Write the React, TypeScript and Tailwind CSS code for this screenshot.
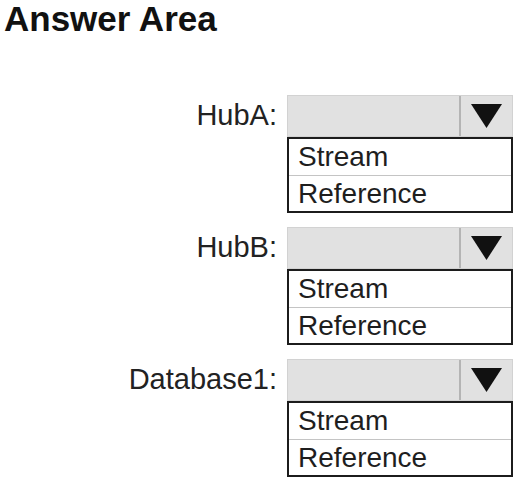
const fields = ["HubA:", "HubB:", "Database1:"];
const options = ["Stream", "Reference"];

function Dropdown() {
  return (
    <div className="flex h-[42px] border border-[#d2d2d2] bg-[#e1e1e1]">
      <div className="flex-1" />
      <div className="flex w-[53px] items-center justify-center border-l-2 border-[#b4b4b4]">
        <svg width="31" height="24" viewBox="0 0 31 24" aria-hidden="true">
          <polygon points="0,0 31,0 15.5,24" fill="#111" />
        </svg>
      </div>
    </div>
  );
}

function OptionList() {
  return (
    <div className="border-2 border-[#1c1c1c] bg-white">
      {options.map((opt, i) => (
        <div
          key={opt}
          className={
            "h-[36px] pl-[9px] text-[28px] leading-[36px] text-[#1e1e1e] " +
            (i > 0 ? "border-t border-[#c4c4c4]" : "")
          }
        >
          {opt}
        </div>
      ))}
    </div>
  );
}

export default function App() {
  return (
    <div className="h-[481px] w-[518px] overflow-hidden bg-white font-['Liberation_Sans',Arial,sans-serif]">
      <h1 className="pl-[4px] text-[35px] font-bold leading-[38px] text-[#111]">Answer Area</h1>
      <div className="mt-[57px] flex flex-col gap-[14px]">
        {fields.map((label) => (
          <div key={label} className="grid grid-cols-[287px_226px]">
            <div className="flex h-[42px] items-center justify-end pr-[10px] text-[29px] text-[#222]">
              {label}
            </div>
            <div>
              <Dropdown />
              <OptionList />
            </div>
          </div>
        ))}
      </div>
    </div>
  );
}
